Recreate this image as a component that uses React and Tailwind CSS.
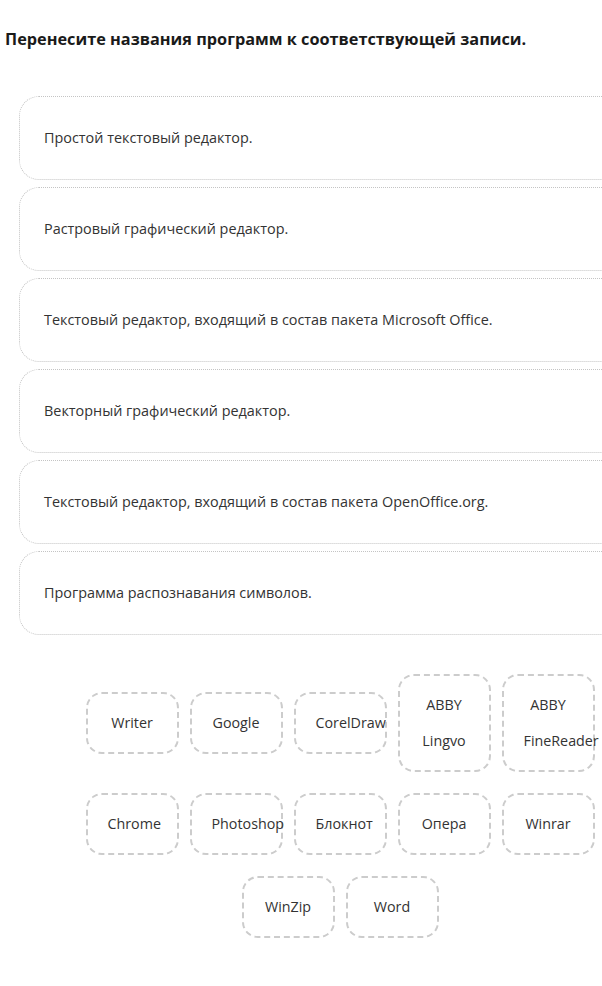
import React from "react";

const statements = [
  "Простой текстовый редактор.",
  "Растровый графический редактор.",
  "Текстовый редактор, входящий в состав пакета Microsoft Office.",
  "Векторный графический редактор.",
  "Текстовый редактор, входящий в состав пакета OpenOffice.org.",
  "Программа распознавания символов.",
];

const programs = [
  ["Writer"],
  ["Google"],
  ["CorelDraw"],
  ["ABBY", "Lingvo"],
  ["ABBY", "FineReader"],
  ["Chrome"],
  ["Photoshop"],
  ["Блокнот"],
  ["Опера"],
  ["Winrar"],
  ["WinZip"],
  ["Word"],
];

const Chip = ({ lines }) => (
  <div className="w-[93px] py-[11px] px-5 border-2 border-dashed border-[#cccccc] rounded-[16px] text-center text-[14.3px] leading-[36px] text-[#333333] whitespace-nowrap">
    {lines.map((l) => (
      <div key={l}>{l}</div>
    ))}
  </div>
);

export default function App() {
  return (
    <div
      className="w-[602px] min-h-[986px] overflow-hidden bg-white"
      style={{ fontFamily: '"Open Sans", "Liberation Sans", sans-serif' }}
    >
      <h1 className="pt-[28px] px-[5px] text-[16.3px] leading-[22px] font-bold text-[#1a1a1a]">
        Перенесите названия программ к соответствующей записи.
      </h1>

      <div className="mt-[46px] ml-[19px] flex flex-col gap-[7px]">
        {statements.map((s) => (
          <div
            key={s}
            className="w-[640px] h-[84px] flex items-center pl-[24px] border border-dotted border-[#c4c4c4] rounded-[20px] text-[14.4px] text-[#333333]"
          >
            {s}
          </div>
        ))}
      </div>

      <div className="mt-[39px] ml-[78px] w-[524px] flex flex-wrap justify-center items-center gap-x-[11px] gap-y-[21px]">
        {programs.map((p) => (
          <Chip key={p.join(" ")} lines={p} />
        ))}
      </div>
    </div>
  );
}
